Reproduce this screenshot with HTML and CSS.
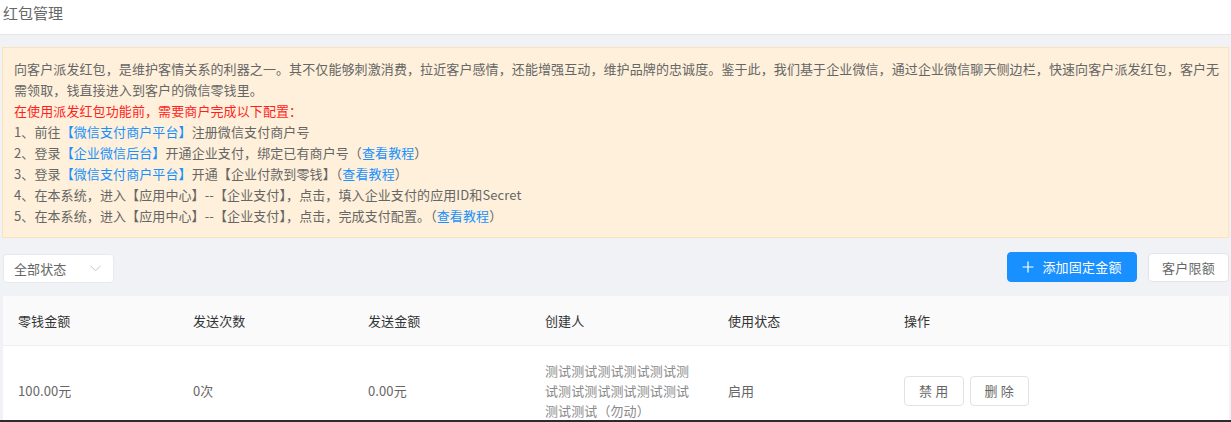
FILE: index.html
```html
<!DOCTYPE html>
<html lang="zh-CN">

<head>
    <meta charset="UTF-8">
    <meta name="viewport" content="width=device-width, initial-scale=1.0">
    <title>红包管理</title>
    <link rel="stylesheet" href="styles.css">
</head>

<body>
    <div class="page">
        <div class="page-header">红包管理</div>

        <div class="content">
            <div class="notice">
                <p>向客户派发红包，是维护客情关系的利器之一。其不仅能够刺激消费，拉近客户感情，还能增强互动，维护品牌的忠诚度。鉴于此，我们基于企业微信，通过企业微信聊天侧边栏，快速向客户派发红包，客户无需领取，钱直接进入到客户的微信零钱里。</p>
                <p class="notice-warn">在使用派发红包功能前，需要商户完成以下配置：</p>
                <p>1、前往<a class="link">【微信支付商户平台】</a>注册微信支付商户号</p>
                <p>2、登录<a class="link">【企业微信后台】</a>开通企业支付，绑定已有商户号（<a class="link">查看教程</a>）</p>
                <p>3、登录<a class="link">【微信支付商户平台】</a>开通【企业付款到零钱】（<a class="link">查看教程</a>）</p>
                <p>4、在本系统，进入【应用中心】--【企业支付】，点击，填入企业支付的应用ID和Secret</p>
                <p>5、在本系统，进入【应用中心】--【企业支付】，点击，完成支付配置。（<a class="link">查看教程</a>）</p>
            </div>

            <div class="toolbar">
                <div class="select">
                    <span>全部状态</span>
                    <svg width="11" height="7" viewBox="0 0 11 7"><path d="M0.5 0.8 L5.5 5.8 L10.5 0.8" fill="none" stroke="#c0c4cc" stroke-width="1"/></svg>
                </div>
                <div class="toolbar-right">
                    <button class="btn btn-primary">
                        <svg width="12" height="12" viewBox="0 0 12 12"><path d="M6 0.5 V11.5 M0.5 6 H11.5" stroke="#fff" stroke-width="1.2"/></svg>
                        添加固定金额
                    </button>
                    <button class="btn btn-limit">客户限额</button>
                </div>
            </div>

            <table class="data-table">
                <colgroup>
                    <col style="width: 175px">
                    <col style="width: 175px">
                    <col style="width: 177px">
                    <col style="width: 183px">
                    <col style="width: 176px">
                    <col>
                </colgroup>
                <thead>
                    <tr>
                        <th>零钱金额</th>
                        <th>发送次数</th>
                        <th>发送金额</th>
                        <th>创建人</th>
                        <th>使用状态</th>
                        <th>操作</th>
                    </tr>
                </thead>
                <tbody>
                    <tr>
                        <td>100.00元</td>
                        <td>0次</td>
                        <td>0.00元</td>
                        <td class="creator">测试测试测试测试测试测试测试测试测试测试测试测试测试（勿动）</td>
                        <td>启用</td>
                        <td>
                            <div class="actions">
                                <button class="btn btn-small">禁 用</button>
                                <button class="btn btn-small">删 除</button>
                            </div>
                        </td>
                    </tr>
                </tbody>
            </table>
        </div>
    </div>
</body>

</html>
```

FILE: styles.css
```css
* {
    box-sizing: border-box;
}

html,
body {
    margin: 0;
    background: #f0f2f5;
}

body {
    font-family: "Noto Sans CJK SC", "Noto Sans", sans-serif;
    font-size: 13px;
    letter-spacing: 0.1px;
    color: #666;
}

.page {
    height: 422px;
    overflow: hidden;
    border-bottom: 2px solid #2b2b2b;
}

.page-header {
    height: 35px;
    padding-left: 3px;
    line-height: 26px;
    font-size: 15px;
    letter-spacing: 0;
    color: #666;
    background: #fff;
    border-bottom: 1px solid #e6e6e6;
}

.content {
    padding: 12px 2px 0;
}

.notice {
    background: #fef0da;
    border: 1px solid #fbe2b9;
    padding: 10px 2px 11px 11px;
    line-height: 21px;
}

.notice p {
    margin: 0;
}

.notice-warn {
    color: #ff1f1f;
}

.link {
    color: #1890ff;
    cursor: pointer;
}

.toolbar {
    display: flex;
    justify-content: space-between;
    align-items: center;
    height: 30px;
    margin: 14px 0 0 1px;
}

.select {
    display: flex;
    align-items: center;
    justify-content: space-between;
    width: 111px;
    height: 29px;
    padding: 0 12px 0 10px;
    background: #fff;
    border: 1px solid #e8e9ec;
    border-radius: 4px;
    color: #666;
    margin-top: 2px;
}

.toolbar-right {
    display: flex;
    gap: 11px;
}

.btn {
    display: inline-flex;
    align-items: center;
    justify-content: center;
    gap: 8px;
    height: 29px;
    padding: 0 13px;
    font-family: inherit;
    font-size: 13px;
    letter-spacing: 0.2px;
    white-space: nowrap;
    color: #666;
    background: #fff;
    border: 1px solid #e3e4e8;
    border-radius: 4px;
    cursor: pointer;
}

.btn-primary {
    width: 130px;
    height: 30px;
    margin-top: -1px;
    color: #fff;
    background: #1890ff;
    border-color: #1890ff;
}

.btn-limit {
    width: 81px;
    padding: 0;
}

.data-table {
    width: 1226px;
    margin: 14px 0 0 1px;
    border-collapse: collapse;
    table-layout: fixed;
    background: #fff;
}

.data-table th {
    height: 49px;
    padding: 0 15px;
    text-align: left;
    font-weight: normal;
    color: #333;
    background: #fafafa;
    border-bottom: 1px solid #eceef2;
}

.data-table td {
    padding: 15px;
    line-height: 20px;
    vertical-align: middle;
    color: #666;
}

.data-table td.creator {
    color: #8a8a8a;
    padding-right: 12px;
}

.actions {
    display: flex;
    gap: 6px;
}

.btn-small {
    height: 30px;
    padding: 0 14px;
    border-color: #e1e2e6;
}
```
